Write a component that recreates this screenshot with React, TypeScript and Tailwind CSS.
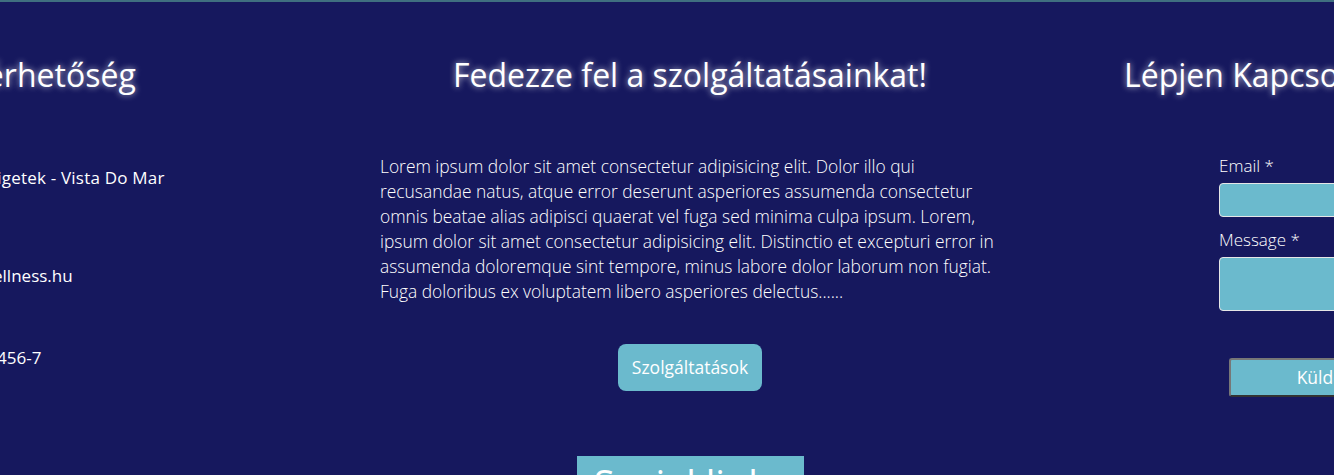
import { memo } from 'react';

const glow = '[text-shadow:0_0_6px_rgba(255,255,255,0.75)]';

function ContactInfo() {
  return (
    <div className="w-[450px] shrink-0 pt-[53px] pl-[90px]">
      <h2 className={`text-[32px] leading-[40px] text-white ${glow}`}>Elérhetőség</h2>
      <div className="mt-[70px] -ml-[54px] text-[17px] leading-[25px] text-white">
        <p className="ml-[17px] tracking-[0.2px]">Kanári-szigetek - Vista Do Mar</p>
        <p className="mt-[73px]">info@spawellness.hu</p>
        <p className="mt-[57px]">+36 30 123 456-7</p>
      </div>
    </div>
  );
}

function Services() {
  return (
    <div className="w-[620px] shrink-0 ml-[60px] pt-[53px] flex flex-col items-center">
      <h2 className={`text-[32px] leading-[40px] text-white ${glow}`}>Fedezze fel a szolgáltatásainkat!</h2>
      <p className="mt-[59px] text-[17.4px] leading-[25px] font-light text-white">
        Lorem ipsum dolor sit amet consectetur adipisicing elit. Dolor illo qui recusandae natus, atque error
        deserunt asperiores assumenda consectetur omnis beatae alias adipisci quaerat vel fuga sed minima culpa
        ipsum. Lorem, ipsum dolor sit amet consectetur adipisicing elit. Distinctio et excepturi error in
        assumenda doloremque sint tempore, minus labore dolor laborum non fugiat. Fuga doloribus ex voluptatem
        libero asperiores delectus......
      </p>
      <button className="mt-[40px] h-[47px] px-[14px] rounded-[8px] bg-[#6bbacd] text-white text-[17.5px]">
        Szolgáltatások
      </button>
      <div className="mt-[65px] w-[227px] h-[60px] bg-[#6bbacd] flex justify-center">
        <span className="text-[38px] leading-[54px] font-medium text-white">Social links</span>
      </div>
    </div>
  );
}

function ContactForm() {
  return (
    <div className="w-[420px] shrink-0 pt-[53px] pl-[124px]">
      <h2 className={`text-[32px] leading-[40px] text-white whitespace-nowrap ${glow}`}>Lépjen Kapcsolatba Velünk!</h2>
      <form className="mt-[59px] ml-[95px] w-[300px] flex flex-col">
        <label className="mb-[5px] text-[17px] leading-[24px] font-light text-white">Email *</label>
        <input className="h-[34px] rounded-[4px] border border-[#e6e6e6] bg-[#6bbacd]" />
        <label className="mt-[11px] mb-[5px] text-[17px] leading-[24px] font-light text-white">Message *</label>
        <textarea className="h-[54px] rounded-[4px] border border-[#e6e6e6] bg-[#6bbacd] resize-none" />
        <button
          type="button"
          className="mt-[47px] ml-[10px] w-[190px] h-[39px] rounded-[3px] border-2 border-[#777] border-b-[#333] border-r-[#333] bg-[#6bbacd] text-white text-[17.5px]"
        >
          Küldés
        </button>
      </form>
    </div>
  );
}

function App() {
  return (
    <div className="min-h-screen overflow-hidden bg-[#16185e] border-t-2 border-[#3f6f80] font-['Open_Sans',sans-serif]">
      <div className="flex -ml-[130px]">
        <ContactInfo />
        <Services />
        <ContactForm />
      </div>
    </div>
  );
}

export default memo(App);
